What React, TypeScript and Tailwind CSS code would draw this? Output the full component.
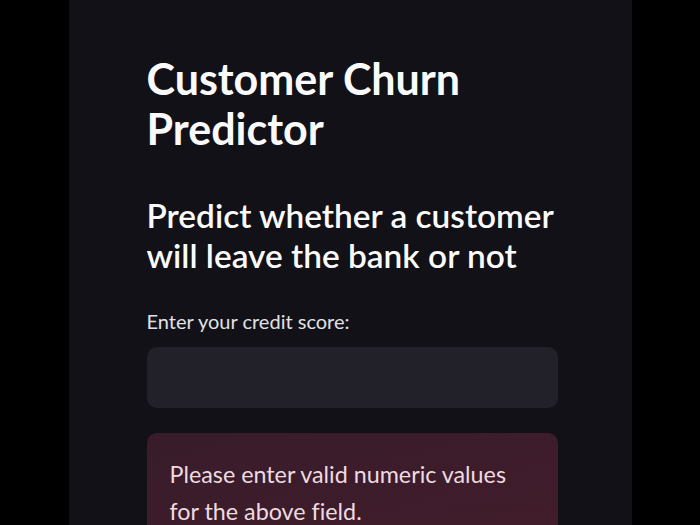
import React from "react";

export default function App() {
  return (
    <div className="w-[700px] h-[525px] bg-black flex justify-center overflow-hidden [font-variant-ligatures:none]" style={{ fontFamily: "Lato, 'Noto Sans', sans-serif" }}>
      <div className="w-[563px] h-full bg-[#111117] pl-[78px] pr-[74px] pt-[54px]">
        <h1 className="text-[43px] leading-[50px] font-bold text-[#fafafa]">Customer Churn Predictor</h1>
        <h2 className="mt-[41px] text-[33.4px] leading-[40px] font-semibold text-[#fafafa]">Predict whether a customer will leave the bank or not</h2>
        <div className="mt-[34px] text-[20px] leading-[24px] text-[#e2e2e6]">Enter your credit score:</div>
        <div className="mt-[14px] h-[61px] rounded-[10px] bg-[#222129]"></div>
        <div className="mt-[25px] h-[120px] rounded-[10px] bg-gradient-to-br from-[#381c2a] to-[#421c2b] px-[23px] pt-[23px] text-[23.3px] leading-[37px] text-[#eedbe1]">
          Please enter valid numeric values for the above field.
        </div>
      </div>
    </div>
  );
}
